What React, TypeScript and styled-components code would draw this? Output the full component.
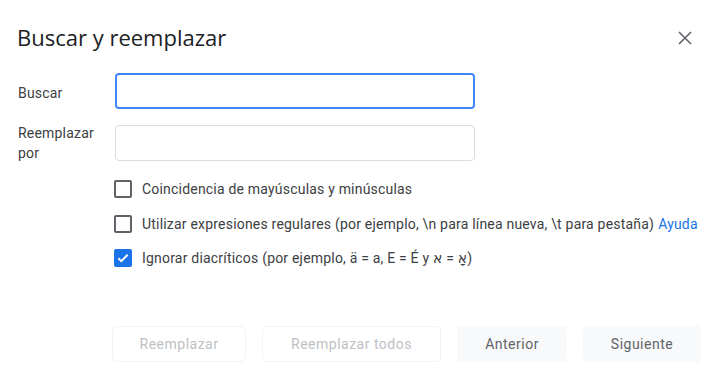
import React from "react";
import styled, { createGlobalStyle } from "styled-components";

const GlobalStyle = createGlobalStyle`
  html, body { margin: 0; padding: 0; background: #ffffff; }
  body { font-family: Roboto, "Noto Sans", "DejaVu Sans", sans-serif; color: #3c4043; }
  * { box-sizing: border-box; }
`;

const Dialog = styled.div`
  width: 720px;
  height: 389px;
  display: flex;
  flex-direction: column;
  padding: 22px 19px 0 17px;
`;

const Header = styled.div`
  display: flex;
  align-items: center;
  justify-content: space-between;
  height: 30px;
`;

const Title = styled.h1`
  margin: 0;
  font-family: "Open Sans", Roboto, sans-serif;
  font-weight: 400;
  font-size: 22px;
  line-height: 28px;
  color: #202124;
`;

const CloseButton = styled.button`
  width: 24px;
  height: 24px;
  border: 0;
  padding: 0;
  background: transparent;
  display: flex;
  align-items: center;
  justify-content: center;
  margin-right: 4px;
  margin-top: 2px;
  color: #5f6368;
`;

const Form = styled.div`
  display: grid;
  grid-template-columns: 97px 360px;
  row-gap: 16px;
  margin-top: 21px;
  padding-left: 1px;
`;

const Label = styled.div<{ $top: number }>`
  font-size: 14px;
  line-height: 20px;
  letter-spacing: 0.2px;
  color: #3c4043;
  margin-top: ${(p) => p.$top}px;
`;

const Input = styled.input<{ $focused?: boolean }>`
  height: 36px;
  width: 360px;
  border-radius: 4px;
  border: ${(p) => (p.$focused ? "2px solid #4285f4" : "1px solid #dadce0")};
  outline: none;
  background: #fff;
  font-size: 14px;
  font-family: Roboto, sans-serif;
`;

const Options = styled.div`
  display: flex;
  flex-direction: column;
  margin-top: 9px;
  padding-left: 97px;
`;

const OptionRow = styled.label`
  display: flex;
  align-items: center;
  gap: 10px;
  height: 34.5px;
  font-size: 14px;
  letter-spacing: 0.2px;
  color: #3c4043;
  white-space: nowrap;
`;

const Box = styled.span<{ $checked?: boolean }>`
  width: 18px;
  height: 18px;
  flex: 0 0 18px;
  border-radius: 2px;
  border: 2px solid ${(p) => (p.$checked ? "#1a73e8" : "#5f6368")};
  background: ${(p) => (p.$checked ? "#1a73e8" : "#fff")};
  display: flex;
  align-items: center;
  justify-content: center;
`;

const HelpLink = styled.a`
  color: #1a73e8;
  text-decoration: none;
  margin-left: 4px;
`;

const Footer = styled.div`
  display: flex;
  justify-content: flex-end;
  gap: 16px;
  margin-top: auto;
  margin-bottom: 27px;
`;

const Button = styled.button<{ $disabled?: boolean; $w: number }>`
  height: 36px;
  width: ${(p) => p.$w}px;
  border-radius: 4px;
  font-family: Roboto, sans-serif;
  font-size: 14px;
  font-weight: 400;
  letter-spacing: 0.5px;
  border: 1px solid ${(p) => (p.$disabled ? "#f1f3f4" : "#f8f9fa")};
  background: ${(p) => (p.$disabled ? "#ffffff" : "#f8f9fa")};
  color: ${(p) => (p.$disabled ? "#bdc1c6" : "#5f6368")};
`;

const Check = () => (
  <svg width="14" height="14" viewBox="0 0 24 24">
    <path d="M4 12.5l5 5L20 6.5" fill="none" stroke="#fff" strokeWidth="3.4" />
  </svg>
);

export default function App() {
  return (
    <>
      <GlobalStyle />
      <Dialog>
        <Header>
          <Title>Buscar y reemplazar</Title>
          <CloseButton aria-label="Cerrar">
            <svg width="14" height="14" viewBox="0 0 14 14">
              <path d="M1 1L13 13M13 1L1 13" stroke="#5f6368" strokeWidth="1.6" />
            </svg>
          </CloseButton>
        </Header>
        <Form>
          <Label $top={10}>Buscar</Label>
          <Input $focused />
          <Label $top={-2}>
            Reemplazar
            <br />
            por
          </Label>
          <Input />
        </Form>
        <Options>
          <OptionRow>
            <Box />
            Coincidencia de mayúsculas y minúsculas
          </OptionRow>
          <OptionRow>
            <Box />
            <span>
              Utilizar expresiones regulares (por ejemplo, \n para línea nueva, \t para pestaña)
              <HelpLink href="#">Ayuda</HelpLink>
            </span>
          </OptionRow>
          <OptionRow>
            <Box $checked>
              <Check />
            </Box>
            <span>
              Ignorar diacríticos (por ejemplo, ä = a, E = É y <bdi>א</bdi> = <bdi>אָ</bdi>)
            </span>
          </OptionRow>
        </Options>
        <Footer>
          <Button $disabled $w={134}>Reemplazar</Button>
          <Button $disabled $w={179}>Reemplazar todos</Button>
          <Button $w={110}>Anterior</Button>
          <Button $w={118}>Siguiente</Button>
        </Footer>
      </Dialog>
    </>
  );
}
